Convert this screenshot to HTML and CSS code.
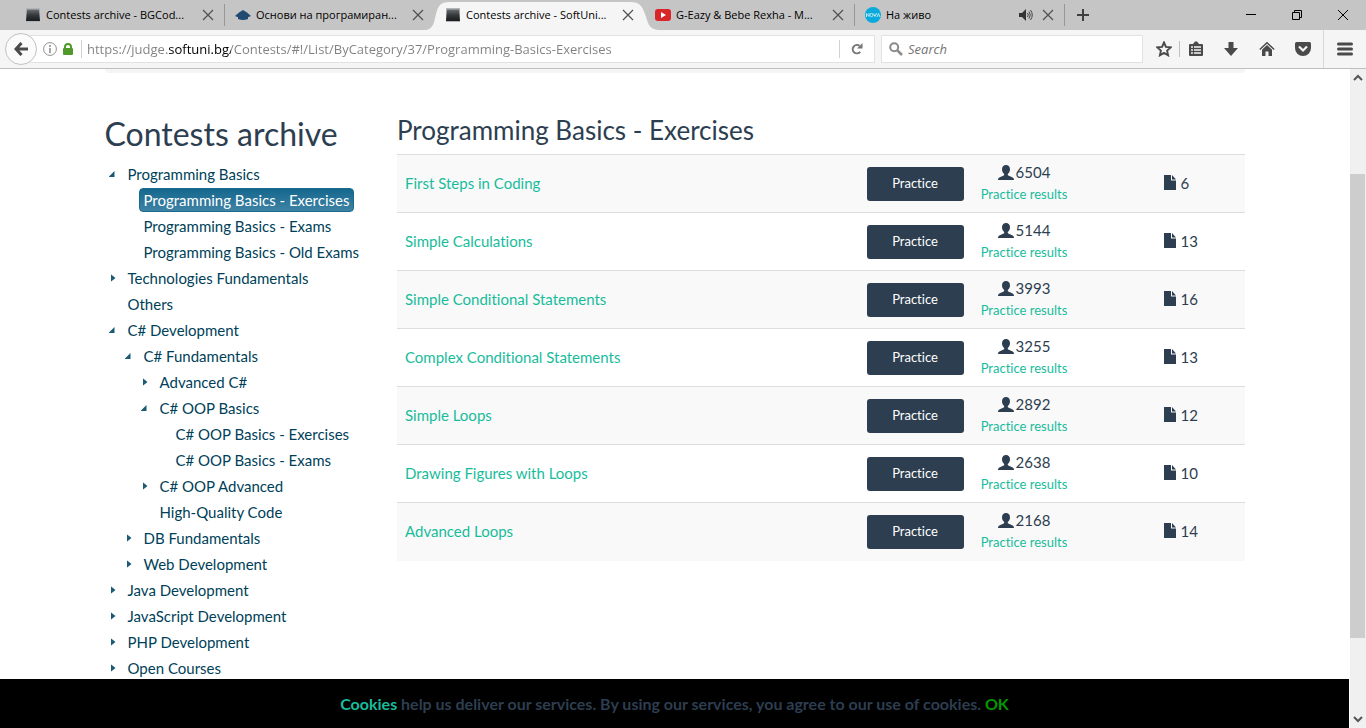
FILE: index.html
```html
<!DOCTYPE html>
<html lang="en">
<head>
<meta charset="utf-8">
<title>Contests archive - SoftUni Judge</title>
<link rel="stylesheet" href="styles.css">
</head>
<body>
<svg width="0" height="0" class="defs" aria-hidden="true">
  <defs>
    <linearGradient id="tile" x1="0" y1="0" x2="0" y2="1"><stop offset="0" stop-color="#6b6e70"/><stop offset=".5" stop-color="#33373a"/><stop offset="1" stop-color="#1a1c1e"/></linearGradient>
    <symbol id="judge" viewBox="0 0 16 16"><path d="M1 1h14v14H1z" fill="#b2b6ba"/><path d="M2 2.500h12l1 11.500H1z" fill="url(#tile)"/></symbol>
    <symbol id="close" viewBox="0 0 12 12"><path d="M1 1l10 10M11 1L1 11" fill="none" stroke="#505050" stroke-width="1.200"/></symbol>
    <symbol id="user" viewBox="0 0 16 16"><path d="M8 0C5.500 0 4 1.700 4 4.200c0 2 .9 3.600 2 4.600.4.500.3 1.500-.3 1.800L1.800 12.300C.7 12.800 0 13.500 0 15h16c0-1.500-.7-2.200-1.800-2.700L10.300 10.600c-.6-.3-.7-1.300-.3-1.800 1.100-1 2-2.600 2-4.600C12 1.700 10.500 0 8 0z" fill="#2c3e50"/></symbol>
    <symbol id="file" viewBox="0 0 12 15"><path d="M0 0h7v5.500h5V15H0zM8 0l4 4.500H8z" fill="#2c3e50"/></symbol>
  </defs>
</svg>

<header class="browser">
  <div class="tabs">
    <div class="tab"><svg class="favicon"><use href="#judge"/></svg><span class="tab-title">Contests archive - BGCod...</span><button class="tab-close" aria-label="Close tab"><svg><use href="#close"/></svg></button></div>
    <div class="tab"><svg class="favicon" viewBox="0 0 16 16"><path d="M8 3l4 2.500 4 3.500-3 1.200V12q-5 2-10 0v-1.800L0 9l4-3.500z" fill="#234a70"/></svg><span class="tab-title">Основи на програмиран...</span><button class="tab-close" aria-label="Close tab"><svg><use href="#close"/></svg></button></div>
    <div class="tab active"><svg class="tab-shape" viewBox="0 0 232 28" preserveAspectRatio="none"><path d="M0 28C8 27 8 19 10 12 12 4 14 0 24 0H204C214 0 216 4 219 12 222 20 222 27 232 28z" fill="#f5f5f5"/></svg><svg class="favicon"><use href="#judge"/></svg><span class="tab-title">Contests archive - SoftUni...</span><button class="tab-close" aria-label="Close tab"><svg><use href="#close"/></svg></button></div>
    <div class="tab"><svg class="favicon" viewBox="0 0 16 16"><rect y="2" width="16" height="12" rx="3" fill="#d8252a"/><path d="M6 5l5 3-5 3z" fill="#fff"/></svg><span class="tab-title">G-Eazy &amp; Bebe Rexha - M...</span><button class="tab-close" aria-label="Close tab"><svg><use href="#close"/></svg></button></div>
    <div class="tab"><svg class="favicon" viewBox="0 0 16 16"><circle cx="8" cy="8" r="8" fill="#0aabdc"/><path d="M1.500 10V6.500L4 9.500V6M8.500 6.500L10 9.500 11.500 6M12 10l1.500-3.500L15 10" fill="none" stroke="#b9e8f6"/><circle cx="6.500" cy="8" r="1.600" fill="none" stroke="#b9e8f6"/></svg><span class="tab-title">На живо</span><svg class="sound" viewBox="0 0 14 12"><path d="M0 4h3l4-4v12L3 8H0z" fill="#333"/><path d="M8.500 4q1.500 2 0 4M10 2.500q2.500 3.500 0 7M11.500 1q3.500 5 0 10" fill="none" stroke="#444"/></svg><button class="tab-close" aria-label="Close tab"><svg><use href="#close"/></svg></button></div>
    <button class="new-tab" aria-label="New tab"><svg viewBox="0 0 12 12"><path d="M6 0v12M0 6h12" stroke="#404040" stroke-width="2"/></svg></button>
    <div class="window-controls">
      <button aria-label="Minimize"><svg viewBox="0 0 10 10"><path d="M0 4.500h10" stroke="#000"/></svg></button>
      <button aria-label="Restore"><svg viewBox="0 0 10 10"><path d="M.5 2.500h7v7h-7zM2.500 2V.5h7v7H8" fill="none" stroke="#000"/></svg></button>
      <button aria-label="Close window"><svg viewBox="0 0 10 10"><path d="M0 0l10 10M10 0L0 10" stroke="#000"/></svg></button>
    </div>
  </div>
  <div class="toolbar">
    <button class="back" aria-label="Back"><svg viewBox="0 0 14 14"><path d="M7.500 1L2 7l5.500 6M2 7h12" fill="none" stroke="#4a4a4a" stroke-width="3"/></svg></button>
    <div class="address">
      <svg class="info" viewBox="0 0 14 14"><circle cx="7" cy="7" r="6.400" fill="none" stroke="#909090"/><path d="M7 3v2M7 6v5" stroke="#808080" stroke-width="1.400"/></svg>
      <svg class="lock" viewBox="0 0 10 12"><path d="M2 6V4a3 3 0 0 1 6 0v2" fill="none" stroke="#4f9a2b" stroke-width="2"/><rect y="5" width="10" height="7" rx="1" fill="#4f9a2b"/></svg>
      <input class="url" type="text" aria-label="Address" value="https://judge.softuni.bg/Contests/#!/List/ByCategory/37/Programming-Basics-Exercises">
      <button class="reload" aria-label="Reload"><svg viewBox="0 0 12 12"><path d="M9.200 8.800A4.200 4.200 0 1 1 8.500 2.800" fill="none" stroke="#757575" stroke-width="2"/><path d="M11.500 0v5.500H6z" fill="#757575"/></svg></button>
    </div>
    <label class="search"><svg viewBox="0 0 14 14"><circle cx="5.200" cy="5.200" r="4" fill="none" stroke="#8a8a8a" stroke-width="2"/><path d="M8.300 8.300L13 13" stroke="#8a8a8a" stroke-width="2.500"/></svg><input type="text" placeholder="Search" aria-label="Search"></label>
    <div class="tools">
      <button aria-label="Bookmark this page"><svg viewBox="0 0 16 16"><path d="M8 1.500l1.900 4.400 4.800.5-3.600 3.200 1 4.700L8 11.900l-4.100 2.400 1-4.700L1.300 6.400l4.800-.5z" fill="none" stroke="#4a4a4a" stroke-width="1.900"/></svg></button>
      <button class="ruled" aria-label="Bookmarks"><svg viewBox="0 0 16 16"><path d="M1 4q0-1 1-1h3l2-2.500h2L11 3h3q1 0 1 1v10q0 1-1 1H2q-1 0-1-1z" fill="#4a4a4a"/><path d="M3 6h2M6 6h7M3 9h2M6 9h7M3 12h2M6 12h7" stroke="#f5f5f5" stroke-width="1.500"/></svg></button>
      <button aria-label="Downloads"><svg viewBox="0 0 16 16"><path d="M5.500 1h5v6H15l-7 8-7-8h4.500z" fill="#4a4a4a"/></svg></button>
      <button aria-label="Home"><svg viewBox="0 0 16 16"><path d="M.8 8.500L8 1.800l7.200 6.700" fill="none" stroke="#4a4a4a" stroke-width="1.500"/><path d="M3 8.700l5-4.600 5 4.600V15H9.500v-4.500h-3V15H3z" fill="#4a4a4a"/></svg></button>
      <button aria-label="Pocket"><svg viewBox="0 0 16 16"><path d="M1.500 1h13Q16 1 16 2.500V7A8 8 0 0 1 0 7V2.500Q0 1 1.500 1z" fill="#4a4a4a"/><path d="M4 5.500l4 4 4-4" fill="none" stroke="#f5f5f5" stroke-width="2.200"/></svg></button>
    </div>
    <button class="menu" aria-label="Menu"><svg viewBox="0 0 16 14"><path d="M1.500 2h13M1.500 7h13M1.500 12h13" stroke="#4a4a4a" stroke-width="3" stroke-linecap="round"/></svg></button>
  </div>
</header>

<div class="viewport">
  <div class="page">
    <div class="scroll-area">
      <div class="container">
        <div class="breadcrumb"></div>
        <div class="columns">
          <aside class="sidebar">
            <h1>Contests archive</h1>
            <ul class="tree">
              <li class="open"><a href="#">Programming Basics</a>
                <ul>
                  <li><a href="#" class="selected">Programming Basics - Exercises</a></li>
                  <li><a href="#">Programming Basics - Exams</a></li>
                  <li><a href="#">Programming Basics - Old Exams</a></li>
                </ul></li>
              <li class="closed"><a href="#">Technologies Fundamentals</a></li>
              <li><a href="#">Others</a></li>
              <li class="open"><a href="#">C# Development</a>
                <ul>
                  <li class="open"><a href="#">C# Fundamentals</a>
                    <ul>
                      <li class="closed"><a href="#">Advanced C#</a></li>
                      <li class="open"><a href="#">C# OOP Basics</a>
                        <ul>
                          <li><a href="#">C# OOP Basics - Exercises</a></li>
                          <li><a href="#">C# OOP Basics - Exams</a></li>
                        </ul></li>
                      <li class="closed"><a href="#">C# OOP Advanced</a></li>
                      <li><a href="#">High-Quality Code</a></li>
                    </ul></li>
                  <li class="closed"><a href="#">DB Fundamentals</a></li>
                  <li class="closed"><a href="#">Web Development</a></li>
                </ul></li>
              <li class="closed"><a href="#">Java Development</a></li>
              <li class="closed"><a href="#">JavaScript Development</a></li>
              <li class="closed"><a href="#">PHP Development</a></li>
              <li class="closed"><a href="#">Open Courses</a></li>
            </ul>
          </aside>
          <main class="contests">
            <h2>Programming Basics - Exercises</h2>
            <table>
              <colgroup><col><col class="col-action"><col class="col-results"><col class="col-files"></colgroup>
              <tbody>
                <tr><td><a href="#">First Steps in Coding</a></td><td><button class="practice">Practice</button></td><td class="results"><div><svg class="user"><use href="#user"/></svg>6504</div><a href="#">Practice results</a></td><td class="files"><svg class="file"><use href="#file"/></svg>6</td></tr>
                <tr><td><a href="#">Simple Calculations</a></td><td><button class="practice">Practice</button></td><td class="results"><div><svg class="user"><use href="#user"/></svg>5144</div><a href="#">Practice results</a></td><td class="files"><svg class="file"><use href="#file"/></svg>13</td></tr>
                <tr><td><a href="#">Simple Conditional Statements</a></td><td><button class="practice">Practice</button></td><td class="results"><div><svg class="user"><use href="#user"/></svg>3993</div><a href="#">Practice results</a></td><td class="files"><svg class="file"><use href="#file"/></svg>16</td></tr>
                <tr><td><a href="#">Complex Conditional Statements</a></td><td><button class="practice">Practice</button></td><td class="results"><div><svg class="user"><use href="#user"/></svg>3255</div><a href="#">Practice results</a></td><td class="files"><svg class="file"><use href="#file"/></svg>13</td></tr>
                <tr><td><a href="#">Simple Loops</a></td><td><button class="practice">Practice</button></td><td class="results"><div><svg class="user"><use href="#user"/></svg>2892</div><a href="#">Practice results</a></td><td class="files"><svg class="file"><use href="#file"/></svg>12</td></tr>
                <tr><td><a href="#">Drawing Figures with Loops</a></td><td><button class="practice">Practice</button></td><td class="results"><div><svg class="user"><use href="#user"/></svg>2638</div><a href="#">Practice results</a></td><td class="files"><svg class="file"><use href="#file"/></svg>10</td></tr>
                <tr><td><a href="#">Advanced Loops</a></td><td><button class="practice">Practice</button></td><td class="results"><div><svg class="user"><use href="#user"/></svg>2168</div><a href="#">Practice results</a></td><td class="files"><svg class="file"><use href="#file"/></svg>14</td></tr>
              </tbody>
            </table>
          </main>
        </div>
      </div>
    </div>
    <footer class="cookies"><a href="#">Cookies</a> help us deliver our services. By using our services, you agree to our use of cookies. <button>OK</button></footer>
  </div>
  <div class="scrollbar">
    <svg viewBox="0 0 10 10"><path d="M1 7l4-4 4 4" fill="none" stroke="#555" stroke-width="2"/></svg>
    <div class="track"><div class="thumb"></div></div>
    <svg viewBox="0 0 10 10"><path d="M1 3l4 4 4-4" fill="none" stroke="#555" stroke-width="2"/></svg>
  </div>
</div>
</body>
</html>
```
FILE: styles.css
```css
* { box-sizing: border-box; }
body {
  margin: 0;
  height: 100vh;
  display: flex;
  flex-direction: column;
  overflow: hidden;
  background: #fff;
  color: #2c3e50;
  font: 15px/21px Lato, sans-serif;
  font-variant-ligatures: none;
}
a { color: #18bc9c; text-decoration: none; }
button { border: 0; padding: 0; background: none; font: inherit; cursor: pointer; }
svg { flex: none; display: block; }
.defs { position: absolute; }

/* browser chrome */
.browser { font: 12px/16px "Open Sans", "Noto Sans", sans-serif; color: #000; }
.tabs { display: flex; align-items: center; height: 30px; padding-left: 15px; background: #c5c5c5; }
.tab {
  position: relative;
  display: flex;
  align-items: center;
  flex: 0 1 210px;
  height: 22px;
  padding: 0 10px;
  border-right: 1px solid #979797;
}
.tab:nth-child(2), .tab.active { border-color: transparent; }
.tab-shape { position: absolute; left: -9px; top: -2px; width: 232px; height: 28px; }
.favicon { position: relative; width: 16px; height: 16px; margin-right: 5px; }
.tab-title { position: relative; flex: 1; white-space: nowrap; overflow: hidden; font-size: 11px; }
.tab-close { position: relative; }
.tab-close svg { width: 12px; height: 12px; }
.sound { width: 14px; height: 12px; margin-right: 9px; }
.new-tab { margin-left: 12px; }
.new-tab svg { width: 12px; height: 12px; }
.window-controls { display: flex; gap: 36px; margin-left: auto; padding-right: 18px; }
.window-controls svg { width: 10px; height: 10px; }

.toolbar {
  display: flex;
  align-items: center;
  height: 39px;
  padding: 0 5px;
  background: #f5f5f5;
  border-bottom: 1px solid #bfbfbf;
}
.back {
  position: relative;
  display: grid;
  place-items: center;
  width: 32px;
  height: 32px;
  border: 1px solid #c2c2c2;
  border-radius: 50%;
  background: #fbfbfb;
}
.back svg { width: 14px; height: 14px; }
.address {
  display: flex;
  align-items: center;
  flex: 1;
  height: 28px;
  margin-left: -16px;
  padding-left: 21px;
  border: 1px solid #e2e2e2;
  background: #fff;
}
.info { width: 14px; height: 14px; }
.lock { width: 10px; height: 12px; margin: 0 8px 0 6px; }
.url {
  flex: 1;
  min-width: 0;
  height: 18px;
  padding: 0 0 0 5px;
  border: 0;
  border-left: 1px solid #d0d0d0;
  font: 13px/18px "Open Sans", "Noto Sans", sans-serif;
  background: linear-gradient(to right, #808080 87px, #000 87px, #000 149px, #808080 149px);
  -webkit-background-clip: text;
  background-clip: text;
  color: transparent;
}
.reload { padding: 3px 11px; border-left: 1px solid #d0d0d0; }
.reload svg { width: 12px; height: 12px; }
.search {
  display: flex;
  align-items: center;
  flex: 0 1 262px;
  height: 28px;
  margin-left: 6px;
  padding: 0 7px;
  border: 1px solid #e2e2e2;
  background: #fff;
}
.search svg { width: 14px; height: 14px; margin-right: 5px; }
.search input { flex: 1; min-width: 0; padding: 0; border: 0; background: none; font: italic 13px/18px "Open Sans", "Noto Sans", sans-serif; }
.search input::placeholder { color: #757575; }
.tools { display: flex; margin-left: 13px; }
.tools button { width: 36px; height: 16px; padding-left: 8px; }
.tools button:first-child { width: 23px; padding: 0; }
.tools svg, .menu svg { width: 16px; height: 16px; }
.tools .ruled { width: 36px; border-left: 1px solid #c0c0c0; }
.menu { height: 38px; padding: 0 8px 0 13px; border-left: 1px solid #d8d8d8; }

/* page */
.viewport { display: flex; flex: 1; min-height: 0; }
.page { display: flex; flex-direction: column; flex: 1; min-width: 0; margin-right: 1px; }
.scroll-area { flex: 1; min-height: 0; overflow: hidden; }
.container { max-width: 1170px; margin: 0 auto; padding: 0 15px; }
.breadcrumb { height: 4px; border-radius: 0 0 4px 4px; background: #f5f5f5; }
.columns { display: flex; margin: 0 -15px; }
.sidebar { flex: 0 0 25%; padding: 42px 15px 0; }
.contests { flex: 1; min-width: 0; padding: 41px 15px 0; }
h1, h2 { margin: 0; font-weight: 400; white-space: nowrap; }
h1 { font-size: 32px; line-height: 38px; }
h2 { font-size: 26px; line-height: 32px; }

.tree, .tree ul { margin: 0; padding: 0; list-style: none; }
.tree { padding: 8px 0 0 18px; }
.tree ul { padding-left: 16px; }
.tree li { position: relative; line-height: 24px; }
.tree a { display: inline-block; margin: 1px 0; padding: 0 4px; border: 1px solid transparent; border-radius: 4px; line-height: 22px; vertical-align: top; color: #003f59; white-space: nowrap; }
.tree .selected { color: #fff; border-color: #1c6a8d; background: linear-gradient(#15678e, #3f83a5); }
.tree .open::before, .tree .closed::before { content: ""; position: absolute; background: #1a5a72; }
.tree .open::before { left: -14px; top: 10px; width: 6px; height: 6px; clip-path: polygon(100% 0, 100% 100%, 0 100%); }
.tree .closed::before { left: -12px; top: 9px; width: 5px; height: 8px; clip-path: polygon(0 0, 100% 50%, 0 100%); }

table { width: 100%; margin-top: 8px; border-collapse: collapse; table-layout: fixed; }
.col-action { width: 113px; }
.col-results { width: 105px; }
.col-files { width: 168px; }
tr { height: 58px; border-top: 1px solid #ddd; }
tr:nth-child(odd) { background: #f9f9f9; }
td { padding: 0 8px; }
.practice { width: 100%; height: 34px; border-radius: 3px; background: #2c3e50; color: #fff; font-size: 13px; }
.results { text-align: center; white-space: nowrap; }
.results div { display: flex; align-items: center; justify-content: center; }
.results a { font-size: 13px; }
.user { width: 16px; height: 16px; margin-right: 2px; }
.files { padding-left: 87px; }
.file { display: inline-block; width: 12px; height: 15px; margin-right: 5px; vertical-align: -1px; }

.cookies { height: 49px; background: #000; text-align: center; font-size: 16px; font-weight: 700; line-height: 50px; }
.cookies button { color: #009900; }

.scrollbar { display: flex; flex-direction: column; align-items: center; width: 16px; padding: 4px 0; background: #f0f0f0; }
.scrollbar svg { width: 10px; height: 10px; }
.track { flex: 1; width: 15px; align-self: flex-start; padding-top: 91px; }
.thumb { height: 86%; background: #cdcdcd; }
```
